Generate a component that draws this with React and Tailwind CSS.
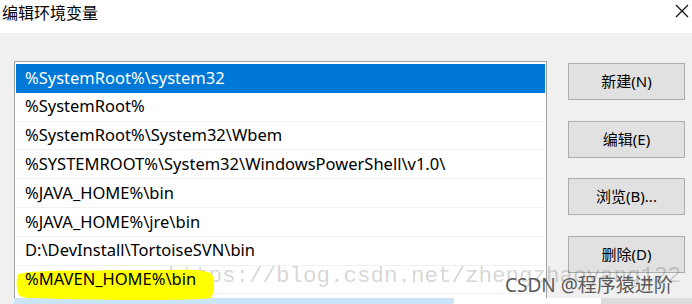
import React from "react";

const paths = [
  "%SystemRoot%\\system32",
  "%SystemRoot%",
  "%SystemRoot%\\System32\\Wbem",
  "%SYSTEMROOT%\\System32\\WindowsPowerShell\\v1.0\\",
  "%JAVA_HOME%\\bin",
  "%JAVA_HOME%\\jre\\bin",
  "D:\\DevInstall\\TortoiseSVN\\bin",
  "%MAVEN_HOME%\\bin",
];

const buttons = ["新建(N)", "编辑(E)", "浏览(B)...", "删除(D)"];

export default function App() {
  return (
    <div
      className="relative w-[692px] h-[304px] overflow-hidden bg-[#f0f0f0] flex flex-col"
      style={{ fontFamily: '"Noto Sans", "Noto Sans CJK SC", sans-serif' }}
    >
      {/* title bar */}
      <div className="h-[33px] bg-white flex items-center justify-between pl-[2px] pr-[2px] shrink-0">
        <span className="text-[16px] text-black leading-none -mt-[8px]">编辑环境变量</span>
        <svg width="14" height="14" viewBox="0 0 14 14" className="-mt-[12px] mr-[1px]">
          <path d="M1 1 L13 13 M13 1 L1 13" stroke="#111" strokeWidth="1.2" />
        </svg>
      </div>

      {/* body */}
      <div className="flex pl-[14px] pt-[28px] flex-1">
        {/* list */}
        <div className="w-[533px] h-[237px] border-t border-l border-r border-[#a0a0a0] bg-white pt-[2px] px-[1px]">
          {paths.map((p, i) => (
            <div
              key={i}
              className={
                "relative h-[28.8px] flex items-center pl-[9px] text-[16.5px] " +
                (i === 0
                  ? "bg-[#0078d7] text-white"
                  : "text-black border-b border-[#f0f0f0]") +
                (i === paths.length - 1 ? " z-[1]" : "")
              }
            >
              {i === paths.length - 1 && (
                <svg
                  className="absolute left-0 top-[2px]"
                  width="200"
                  height="34"
                  viewBox="0 0 200 34"
                >
                  <path
                    d="M2 6 C20 1 80 3 150 2 C175 1 192 2 196 6 C199 14 199 24 195 30 C170 33 90 32 40 31 C20 30 6 31 3 27 C0 20 0 12 2 6 Z"
                    fill="#ffff00"
                  />
                </svg>
              )}
              <span className="relative leading-none">{p}</span>
            </div>
          ))}
        </div>

        {/* buttons */}
        <div className="ml-[21px] pt-[2px] flex flex-col gap-[20.5px]">
          {buttons.map((b) => (
            <button
              key={b}
              className="w-[117px] h-[37px] border border-[#adadad] bg-[#e1e1e1] text-[15px] text-black flex items-center justify-center"
            >
              {b}
            </button>
          ))}
        </div>
      </div>

      {/* cut-off strip at the bottom */}
      <div className="h-[6px] flex shrink-0 bg-white">
        <div className="w-[14px] bg-[#f0f0f0]" />
        <div className="w-[440px] bg-[#cce4f7]" />
        <div className="w-[147px] bg-white" />
        <div className="flex-1 bg-[#dcdcdc]" />
      </div>

      {/* watermark */}
      <div
        className="absolute left-[168px] top-[260px] text-[22.5px] text-[rgba(0,0,0,0.18)] whitespace-nowrap pointer-events-none"
        style={{ fontFamily: '"Liberation Mono", monospace' }}
      >
        https://blog.csdn.net/zhengzhaoyang122
      </div>
      <div className="absolute z-[2] left-[505px] top-[276px] text-[19px] text-[#5a5a5a] whitespace-nowrap pointer-events-none leading-none">
        CSDN @程序猿进阶
      </div>
    </div>
  );
}
